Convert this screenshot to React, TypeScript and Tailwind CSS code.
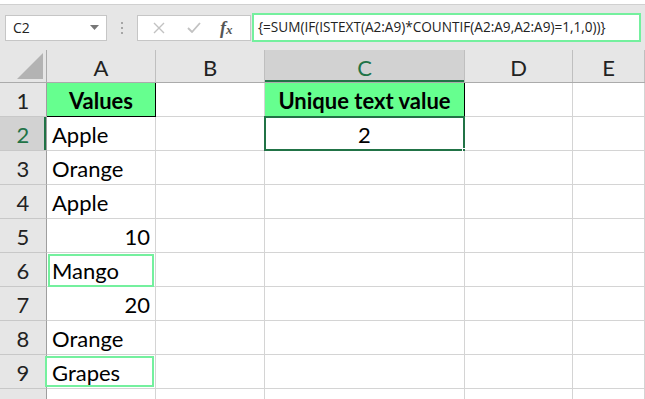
import React from 'react'

const cellFont = { fontFamily: 'Lato, "Open Sans", sans-serif' }

const cols = [
  { key: 'A', w: 'w-[109px]' },
  { key: 'B', w: 'w-[109px]' },
  { key: 'C', w: 'w-[200px]' },
  { key: 'D', w: 'w-[108px]' },
  { key: 'E', w: 'flex-1' },
]

type Cell = { text?: string; align?: 'left' | 'right' | 'center'; bold?: boolean; fill?: boolean }

const data: Record<number, Record<string, Cell>> = {
  1: {
    A: { text: 'Values', align: 'center', bold: true, fill: true },
    C: { text: 'Unique text value', align: 'center', bold: true, fill: true },
  },
  2: { A: { text: 'Apple' }, C: { text: '2', align: 'center' } },
  3: { A: { text: 'Orange' } },
  4: { A: { text: 'Apple' } },
  5: { A: { text: '10', align: 'right' } },
  6: { A: { text: 'Mango' } },
  7: { A: { text: '20', align: 'right' } },
  8: { A: { text: 'Orange' } },
  9: { A: { text: 'Grapes' } },
  10: {},
}

function FormulaBar() {
  return (
    <div className="flex h-[45px] items-center bg-[#e6e6e6] pl-[5px]">
      {/* Name box */}
      <div className="flex h-[26px] w-[102px] items-center justify-between border border-[#c6c6c6] bg-white pl-[7px] pr-[7px] text-[14px] text-[#222]" style={{ fontFamily: '"Open Sans", sans-serif' }}>
        <span>C2</span>
        <svg width="9" height="5" viewBox="0 0 9 5"><path d="M0 0h9L4.5 5z" fill="#777" /></svg>
      </div>
      <div className="flex w-[30px] flex-col items-center gap-[3px]">
        <span className="h-[2px] w-[2px] bg-[#a6a6a6]" />
        <span className="h-[2px] w-[2px] bg-[#a6a6a6]" />
        <span className="h-[2px] w-[2px] bg-[#a6a6a6]" />
      </div>
      {/* Cancel / enter / fx */}
      <div className="flex h-[26px] w-[114px] items-center border border-[#c6c6c6] bg-white">
        <svg className="ml-[15px]" width="12" height="12" viewBox="0 0 12 12"><path d="M1 1l10 10M11 1L1 11" stroke="#c2c2c2" strokeWidth="1.4" /></svg>
        <svg className="ml-[22px]" width="14" height="11" viewBox="0 0 14 11"><path d="M1 6l4 4 8-9" stroke="#c2c2c2" strokeWidth="1.8" fill="none" /></svg>
        <span className="ml-[19px] text-[18px] font-bold italic leading-none text-[#555]" style={{ fontFamily: '"Liberation Serif", serif' }}>
          f<span className="text-[13px]">x</span>
        </span>
      </div>
      {/* Formula input */}
      <div className="ml-[1px] flex h-[29px] w-[389px] items-center border-2 border-[#74f09e] bg-white pl-[4px] text-[13.6px] text-[#222]" style={{ fontFamily: '"Open Sans", sans-serif' }}>
        {'{=SUM(IF(ISTEXT(A2:A9)*COUNTIF(A2:A9,A2:A9)=1,1,0))}'}
      </div>
    </div>
  )
}

function HeaderRow() {
  return (
    <div className="flex h-[33px] border-b border-[#ababab] bg-[#e6e6e6]" style={cellFont}>
      <div className="flex w-[47px] items-end justify-end border-r border-[#ababab] pb-[3px] pr-[3px]">
        <svg width="26" height="26" viewBox="0 0 26 26"><path d="M26 0v26H0z" fill="#b3b3b3" /></svg>
      </div>
      {cols.map(c => {
        const sel = c.key === 'C'
        return (
          <div
            key={c.key}
            className={`${c.w} flex items-center justify-center border-r border-[#bfbfbf] pt-[2px] text-[22px] ${
              sel ? 'bg-[#d2d2d2] text-[#217346] shadow-[inset_0_-2px_0_#217346]' : 'text-[#222]'
            }`}
          >
            {c.key}
          </div>
        )
      })}
    </div>
  )
}

function Row({ n }: { n: number }) {
  const row = data[n] || {}
  const selRow = n === 2
  return (
    <div className="flex h-[34px]" style={cellFont}>
      <div
        className={`flex w-[47px] items-center justify-center border-b border-r border-[#c8c8c8] border-r-[#9e9e9e] pt-[2px] text-[22px] ${
          selRow ? 'bg-[#d2d2d2] text-[#217346] shadow-[inset_-2px_0_0_#217346]' : 'bg-[#e6e6e6] text-[#222]'
        }`}
      >
        {n < 10 ? n : ''}
      </div>
      {cols.map(c => {
        const cell = row[c.key]
        const align = cell?.align === 'right' ? 'justify-end' : cell?.align === 'center' ? 'justify-center' : 'justify-start'
        const isSel = n === 2 && c.key === 'C'
        const headerBox = cell?.fill
        const greenBox = (n === 6 || n === 9) && c.key === 'A'
        return (
          <div
            key={c.key}
            className={`${c.w} relative flex items-center px-[5px] pt-[2px] text-[22px] text-black ${align} ${
              headerBox ? 'border-b border-r border-black bg-[#66ff8f]' : 'border-b border-r border-[#d4d4d4] bg-white'
            } ${cell?.bold ? 'font-bold' : ''}`}
          >
            {cell?.text}
            {isSel && (
              <>
                <div className="pointer-events-none absolute inset-[-1px] border-2 border-[#217346]" />
                <div className="absolute bottom-[-4px] right-[-4px] h-[6px] w-[6px] border border-white bg-[#217346]" />
              </>
            )}
            {greenBox && (
              <div className={`pointer-events-none absolute border-2 border-[#74f09e] ${n === 6 ? 'inset-x-[1px] top-[1px] bottom-[-1px]' : 'left-[-2px] right-[1px] top-[1px] bottom-[1px]'}`} />
            )}
          </div>
        )
      })}
    </div>
  )
}

export default function App() {
  return (
    <div className="h-[399px] w-[645px] overflow-hidden bg-white">
      <div className="h-[5px] border-b border-[#d0d0d0] bg-white" />
      <FormulaBar />
      <HeaderRow />
      {[1, 2, 3, 4, 5, 6, 7, 8, 9, 10].map(n => (
        <Row key={n} n={n} />
      ))}
    </div>
  )
}
